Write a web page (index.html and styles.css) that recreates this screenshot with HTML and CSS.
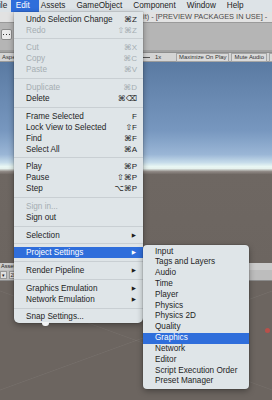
FILE: index.html
```html
<!DOCTYPE html>
<html>
<head>
<meta charset="utf-8">
<link rel="stylesheet" href="styles.css">
<title>Edit menu</title>
</head>
<body>
<div class="screen">
  <div class="menubar">
    <span class="mb-item mb-cut">ile</span>
    <span class="mb-item mb-open">Edit</span>
    <span class="mb-item">Assets</span>
    <span class="mb-item">GameObject</span>
    <span class="mb-item">Component</span>
    <span class="mb-item">Window</span>
    <span class="mb-item">Help</span>
  </div>

  <div class="titlebar">it) - [PREVIEW PACKAGES IN USE] -</div>

  <div class="toolbar">
    <span class="tool-icon"><i></i><i></i><i></i></span>
  </div>
  <div class="tabstrip"></div>

  <div class="gamebar">
    <span class="aspect">Aspect</span>
    <span class="scale"><b class="slider"></b>1x</span>
    <span class="gbtn">Maximize On Play</span>
    <span class="gbtn">Mute Audio</span>
    <span class="gbtn">Stats</span>
  </div>

  <div class="gameview"></div>

  <div class="panelhead"><span class="ptab">Assets</span></div>
  <div class="panelbar"><span class="pctl">▾</span><span class="pctl">2D</span></div>
  <div class="scene">
    <span class="gizmo"></span>
  </div>

  <!-- Edit dropdown -->
  <div class="menu edit-menu">
    <div class="mi"><span>Undo Selection Change</span><span class="key">⌘Z</span></div>
    <div class="mi off"><span>Redo</span><span class="key">⇧⌘Z</span></div>
    <div class="sep"></div>
    <div class="mi off"><span>Cut</span><span class="key">⌘X</span></div>
    <div class="mi off"><span>Copy</span><span class="key">⌘C</span></div>
    <div class="mi off"><span>Paste</span><span class="key">⌘V</span></div>
    <div class="sep"></div>
    <div class="mi off"><span>Duplicate</span><span class="key">⌘D</span></div>
    <div class="mi"><span>Delete</span><span class="key">⌘⌫</span></div>
    <div class="sep"></div>
    <div class="mi"><span>Frame Selected</span><span class="key">F</span></div>
    <div class="mi"><span>Lock View to Selected</span><span class="key">⇧F</span></div>
    <div class="mi"><span>Find</span><span class="key">⌘F</span></div>
    <div class="mi"><span>Select All</span><span class="key">⌘A</span></div>
    <div class="sep"></div>
    <div class="mi"><span>Play</span><span class="key">⌘P</span></div>
    <div class="mi"><span>Pause</span><span class="key">⇧⌘P</span></div>
    <div class="mi"><span>Step</span><span class="key">⌥⌘P</span></div>
    <div class="sep"></div>
    <div class="mi off"><span>Sign in...</span></div>
    <div class="mi"><span>Sign out</span></div>
    <div class="sep"></div>
    <div class="mi"><span>Selection</span><span class="arrow">▶</span></div>
    <div class="sep"></div>
    <div class="mi hot"><span>Project Settings</span><span class="arrow">▶</span></div>
    <div class="sep"></div>
    <div class="mi"><span>Render Pipeline</span><span class="arrow">▶</span></div>
    <div class="sep"></div>
    <div class="mi"><span>Graphics Emulation</span><span class="arrow">▶</span></div>
    <div class="mi"><span>Network Emulation</span><span class="arrow">▶</span></div>
    <div class="sep"></div>
    <div class="mi"><span>Snap Settings...</span></div>
  </div>
  <div class="nub"></div>

  <!-- Project Settings submenu -->
  <div class="menu sub-menu">
    <div class="si">Input</div>
    <div class="si">Tags and Layers</div>
    <div class="si">Audio</div>
    <div class="si">Time</div>
    <div class="si">Player</div>
    <div class="si">Physics</div>
    <div class="si">Physics 2D</div>
    <div class="si">Quality</div>
    <div class="si hot">Graphics</div>
    <div class="si">Network</div>
    <div class="si">Editor</div>
    <div class="si">Script Execution Order</div>
    <div class="si">Preset Manager</div>
  </div>
</div>
</body>
</html>
```

FILE: styles.css
```css
html, body { margin: 0; padding: 0; }

body {
  font-family: "Liberation Sans", "DejaVu Sans", sans-serif;
  color: #1e1e1e;
  background: #6c6560;
}

.screen {
  position: relative;
  width: 272px;
  height: 400px;
  overflow: hidden;
}

/* mac menu bar */
.menubar {
  display: flex;
  height: 12px;
  line-height: 12px;
  font-size: 8.2px;
  background: #dde3e7;
  white-space: nowrap;
}
.mb-item { padding: 0 5.5px; flex-shrink: 0; }
.mb-cut { padding: 0; margin-left: -1px; margin-right: 3.5px; }
.mb-open {
  background: #2f6edb;
  color: #fff;
  padding: 0 9.5px 0 5px;
  margin-right: -4px;
}

/* unity window behind */
.titlebar {
  height: 10px;
  line-height: 10px;
  background: #e2e2e2;
  color: #4a4a4a;
  font-size: 7.4px;
  padding-left: 143px;
  white-space: nowrap;
}

.toolbar {
  height: 21px;
  background: #b5b5b5;
  padding-top: 6px;
  border-top: 1px solid #9a9a9a;
}
.tool-icon {
  display: flex;
  gap: 1.5px;
  align-items: center;
  justify-content: center;
  width: 9px;
  height: 9px;
  margin-left: 1px;
  background: #ececec;
  border-radius: 2px;
  border: 1px solid #8c8c8c;
}
.tool-icon i { width: 1.5px; height: 1.5px; background: #333; }

.tabstrip {
  height: 2px;
  background: #a2a2a2;
  border-bottom: 1px solid #8e8e8e;
}

.gamebar {
  display: flex;
  align-items: center;
  height: 8px;
  background: #d4d4d4;
  font-size: 5.9px;
  color: #333;
  white-space: nowrap;
  border-bottom: 1px solid #9b9b9b;
}
.gamebar > span { flex-shrink: 0; }
.aspect { width: 135px; padding-left: 2px; box-sizing: border-box; }
.scale {
  display: flex;
  align-items: center;
  gap: 5px;
  width: 41px;
}
.slider { width: 15px; height: 1px; background: #555; }
.gbtn {
  border: 1px solid #a5a5a5;
  background: #dadada;
  padding: 0 2px;
  margin-right: 2px;
  line-height: 7px;
}

.gameview {
  height: 201px;
  background: linear-gradient(#5a7aa2 0%, #7797bf 34%, #9ab6d6 46%, #c6dcea 50%, #e9f7f4 52%, #e6f2ee 53%, #8f8884 54.5%, #6e6762 56%, #6c6560 100%);
}

.panelhead {
  height: 7px;
  background: #cbcbcb;
  font-size: 5.6px;
  line-height: 7px;
  color: #222;
}
.ptab { padding-left: 1px; }
.panelbar {
  display: flex;
  gap: 2px;
  height: 10px;
  background: #bdbdbd;
  border-bottom: 1px solid #8a8a8a;
  font-size: 5px;
  align-items: center;
}
.pctl {
  background: #e0e0e0;
  border: 1px solid #999;
  padding: 0 1px;
  line-height: 6px;
}

.scene {
  position: relative;
  height: 119px;
  background:
    linear-gradient(160deg, transparent 49.7%, rgba(255,255,255,0.06) 50%, transparent 50.4%),
    linear-gradient(20deg, transparent 49.7%, rgba(255,255,255,0.05) 50%, transparent 50.4%),
    #6c6560;
}
.gizmo {
  position: absolute;
  right: 2px;
  top: 47px;
  width: 5px;
  height: 5px;
  border-radius: 50%;
  background: #b8504a;
}

/* dropdown menus */
.menu {
  position: absolute;
  background: #dfe5e8;
  font-size: 8.2px;
  box-shadow: 0 2px 6px rgba(0, 0, 0, 0.35), 0 0 0 0.5px rgba(0, 0, 0, 0.15);
  white-space: nowrap;
}

.edit-menu {
  left: 14px;
  top: 12px;
  width: 129px;
  padding: 1.5px 0 1px;
  border-radius: 0 0 5px 5px;
}

.mi {
  display: flex;
  justify-content: space-between;
  align-items: center;
  height: 11px;
  line-height: 11px;
  padding: 0 6px 0 12px;
}
.mi.off { color: #a5adb2; }
.mi.hot, .si.hot { background: #2f6edb; color: #fff; }
.key { font-size: 8px; }
.arrow { font-size: 5.5px; margin-right: 1px; }

.sep {
  height: 1px;
  margin: 2.85px 0;
  background: #c9cfd3;
}

.nub {
  position: absolute;
  left: 42px;
  top: 322px;
  width: 7px;
  height: 4px;
  background: #f2f4f5;
  border-radius: 0 0 3px 3px;
}

.sub-menu {
  left: 143px;
  top: 245px;
  width: 106px;
  padding: 1.5px 0 2px;
  border-radius: 4px;
}
.si {
  height: 10.83px;
  line-height: 10.83px;
  padding-left: 12px;
}
```
